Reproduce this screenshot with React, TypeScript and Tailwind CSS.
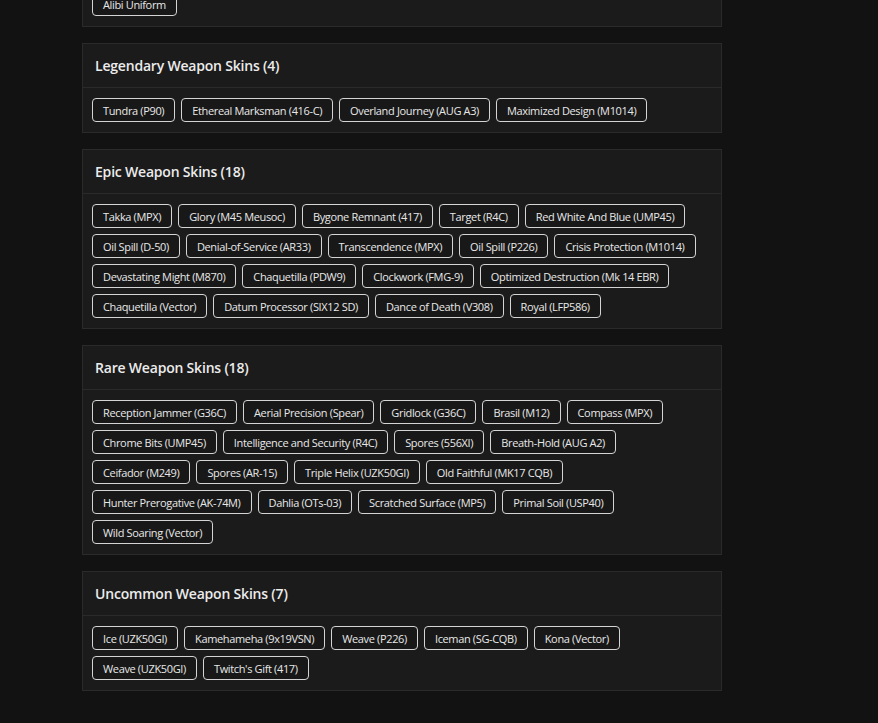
import React from "react";

const sections: { title: string; rows: string[][] }[] = [
  {
    title: "Legendary Weapon Skins (4)",
    rows: [["Tundra (P90)", "Ethereal Marksman (416-C)", "Overland Journey (AUG A3)", "Maximized Design (M1014)"]],
  },
  {
    title: "Epic Weapon Skins (18)",
    rows: [
      ["Takka (MPX)", "Glory (M45 Meusoc)", "Bygone Remnant (417)", "Target (R4C)", "Red White And Blue (UMP45)"],
      ["Oil Spill (D-50)", "Denial-of-Service (AR33)", "Transcendence (MPX)", "Oil Spill (P226)", "Crisis Protection (M1014)"],
      ["Devastating Might (M870)", "Chaquetilla (PDW9)", "Clockwork (FMG-9)", "Optimized Destruction (Mk 14 EBR)"],
      ["Chaquetilla (Vector)", "Datum Processor (SIX12 SD)", "Dance of Death (V308)", "Royal (LFP586)"],
    ],
  },
  {
    title: "Rare Weapon Skins (18)",
    rows: [
      ["Reception Jammer (G36C)", "Aerial Precision (Spear)", "Gridlock (G36C)", "Brasil (M12)", "Compass (MPX)"],
      ["Chrome Bits (UMP45)", "Intelligence and Security (R4C)", "Spores (556XI)", "Breath-Hold (AUG A2)"],
      ["Ceifador (M249)", "Spores (AR-15)", "Triple Helix (UZK50GI)", "Old Faithful (MK17 CQB)"],
      ["Hunter Prerogative (AK-74M)", "Dahlia (OTs-03)", "Scratched Surface (MP5)", "Primal Soil (USP40)"],
      ["Wild Soaring (Vector)"],
    ],
  },
  {
    title: "Uncommon Weapon Skins (7)",
    rows: [
      ["Ice (UZK50GI)", "Kamehameha (9x19VSN)", "Weave (P226)", "Iceman (SG-CQB)", "Kona (Vector)"],
      ["Weave (UZK50GI)", "Twitch's Gift (417)"],
    ],
  },
];

function Chip({ label }: { label: string }) {
  return (
    <span className="inline-flex h-[24px] items-center whitespace-nowrap rounded-[4px] border border-[#d4d4d4] bg-[#181818] px-[10px] text-[11px] leading-none tracking-[-0.35px] text-[#e8e8e8]">
      {label}
    </span>
  );
}

function ChipRows({ rows }: { rows: string[][] }) {
  return (
    <div className="flex flex-col gap-[6px] px-[9px] py-[10px]">
      {rows.map((r, i) => (
        <div key={i} className="flex gap-[6px]">
          {r.map((it) => (
            <Chip key={it} label={it} />
          ))}
        </div>
      ))}
    </div>
  );
}

export default function App() {
  return (
    <div
      className="min-h-[723px] w-full overflow-hidden bg-[#121212] pb-[40px]"
      style={{ fontFamily: '"Open Sans", "Noto Sans", sans-serif' }}
    >
      <div className="ml-[82px] flex w-[640px] flex-col gap-[16px]">
        <div className="mt-[-19px] border border-[#2a2a2a] bg-[#1b1b1b]">
          <ChipRows rows={[["Alibi Uniform"]]} />
        </div>
        {sections.map((s) => (
          <div key={s.title} className="border border-[#2a2a2a] bg-[#1b1b1b]">
            <div className="border-b border-[#2a2a2a] px-[12px] py-[12px] text-[14px] leading-[19px] font-semibold tracking-[-0.2px] text-[#ececec]">
              {s.title}
            </div>
            <ChipRows rows={s.rows} />
          </div>
        ))}
      </div>
    </div>
  );
}
